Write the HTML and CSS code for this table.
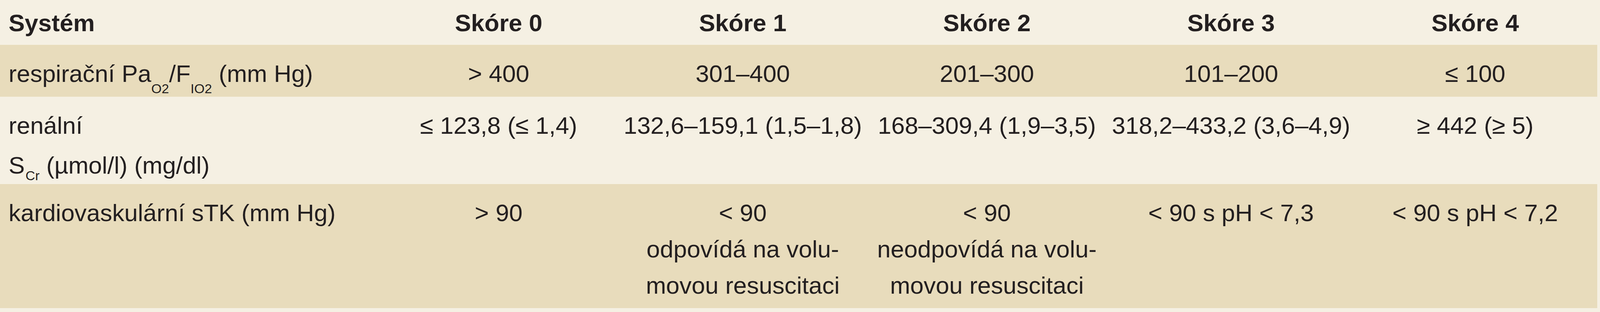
FILE: index.html
```html
<!DOCTYPE html>
<html lang="cs">
<head>
<meta charset="utf-8">
<title>Skóre</title>
<link rel="stylesheet" href="styles.css">
</head>
<body>
<table class="score">
  <colgroup>
    <col class="c-sys">
    <col class="c-val"><col class="c-val"><col class="c-val"><col class="c-val"><col class="c-val">
  </colgroup>
  <thead>
    <tr class="r-head">
      <th class="lbl">Systém</th>
      <th>Skóre 0</th>
      <th>Skóre 1</th>
      <th>Skóre 2</th>
      <th>Skóre 3</th>
      <th>Skóre 4</th>
    </tr>
  </thead>
  <tbody>
    <tr class="r-dark r-one">
      <td class="lbl">respirační Pa<sub class="sub-low">O2</sub>/F<sub class="sub-low">IO2</sub> (mm Hg)</td>
      <td>&gt; 400</td>
      <td>301–400</td>
      <td>201–300</td>
      <td>101–200</td>
      <td>≤ 100</td>
    </tr>
    <tr class="r-light r-two">
      <td class="lbl">renální<span class="line2">S<sub class="sub-mid">Cr</sub> (µmol/l) (mg/dl)</span></td>
      <td>≤ 123,8 (≤ 1,4)</td>
      <td>132,6–159,1 (1,5–1,8)</td>
      <td>168–309,4 (1,9–3,5)</td>
      <td>318,2–433,2 (3,6–4,9)</td>
      <td>≥ 442 (≥ 5)</td>
    </tr>
    <tr class="r-dark r-three">
      <td class="lbl">kardiovaskulární sTK (mm Hg)</td>
      <td>&gt; 90</td>
      <td>&lt; 90<br>odpovídá na volu-<br>movou resuscitaci</td>
      <td>&lt; 90<br>neodpovídá na volu-<br>movou resuscitaci</td>
      <td>&lt; 90 s pH &lt; 7,3</td>
      <td>&lt; 90 s pH &lt; 7,2</td>
    </tr>
  </tbody>
</table>
</body>
</html>
```

FILE: styles.css
```css
html, body {
  margin: 0;
  padding: 0;
  background: #f5f0e3;
}

body {
  font-family: "Liberation Sans", Arial, sans-serif;
  font-size: 62px;
  line-height: 93px;
  color: #231f20;
}

.score {
  border-collapse: collapse;
  border-spacing: 0;
  table-layout: fixed;
  width: 4089px;
}

.c-sys { width: 964px; }
.c-val { width: 625px; }

.score th,
.score td {
  padding: 27px 2px 0;
  vertical-align: top;
  text-align: center;
  white-space: nowrap;
}

.score th {
  font-weight: bold;
  padding-top: 12px;
}

.score .lbl {
  text-align: left;
  padding-left: 22px;
}

.r-head { height: 115px; background: #f5f0e3; }
.r-dark { background: #e8dcbc; }
.r-light { background: #f5f0e3; }
.r-one { height: 133px; }
.r-two { height: 224px; }
.r-three { height: 318px; }

.line2 {
  display: block;
  padding-top: 9px;
}

sub {
  font-size: 0.55em;
  line-height: 0;
  vertical-align: baseline;
  position: relative;
}

.sub-low { top: 0.85em; }
.sub-mid { top: 0.5em; margin-left: 2px; }
```
